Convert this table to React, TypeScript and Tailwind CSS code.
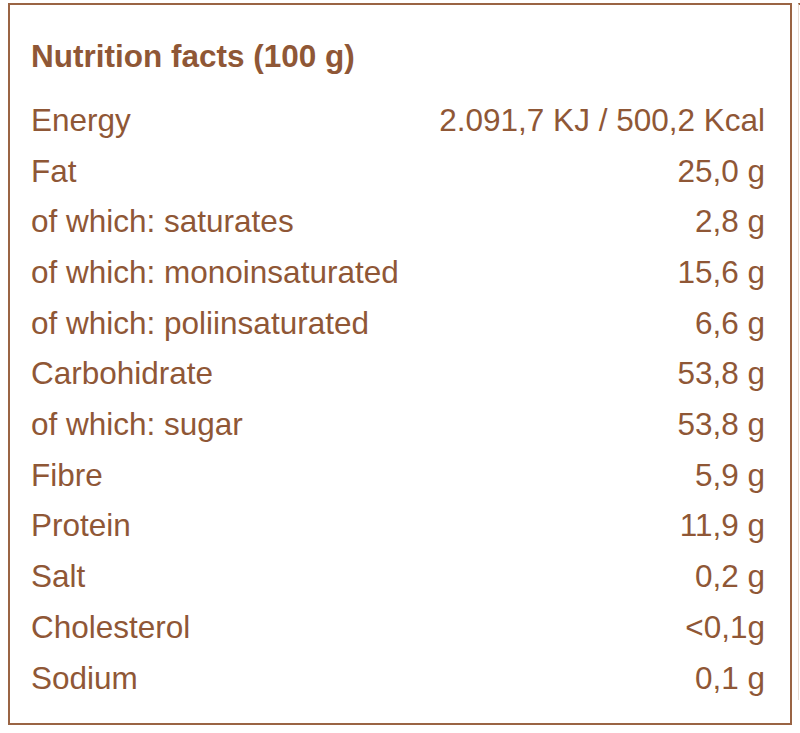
import React from "react";

const rows: [string, string][] = [
  ["Energy", "2.091,7 KJ / 500,2 Kcal"],
  ["Fat", "25,0 g"],
  ["of which: saturates", "2,8 g"],
  ["of which: monoinsaturated", "15,6 g"],
  ["of which: poliinsaturated", "6,6 g"],
  ["Carbohidrate", "53,8 g"],
  ["of which: sugar", "53,8 g"],
  ["Fibre", "5,9 g"],
  ["Protein", "11,9 g"],
  ["Salt", "0,2 g"],
  ["Cholesterol", "<0,1g"],
  ["Sodium", "0,1 g"],
];

export default function App() {
  return (
    <div
      className="w-[800px] h-[733px] overflow-hidden bg-white flex items-start pt-[3px] pl-[8px] text-[#8f5736]"
      style={{ fontFamily: '"Liberation Sans", Arial, Helvetica, sans-serif' }}
    >
      <div className="w-[784px] h-[722px] shrink-0 border-2 border-[#9a6444] pt-[26px] pl-[21px] pr-[25px] flex flex-col">
        <div className="h-[50.7px] leading-[50.7px] text-[31.5px] font-bold mb-[13.3px]">
          Nutrition facts (100 g)
        </div>
        {rows.map(([k, v]) => (
          <div
            key={k}
            className="h-[50.7px] leading-[50.7px] text-[31.5px] flex justify-between"
          >
            <span>{k}</span>
            <span>{v}</span>
          </div>
        ))}
      </div>
      <div className="ml-[6px] w-[4px] h-[697px] shrink-0 border-t-2 border-t-[#9a6444] border-l border-l-[#e8ded6]" />
    </div>
  );
}
